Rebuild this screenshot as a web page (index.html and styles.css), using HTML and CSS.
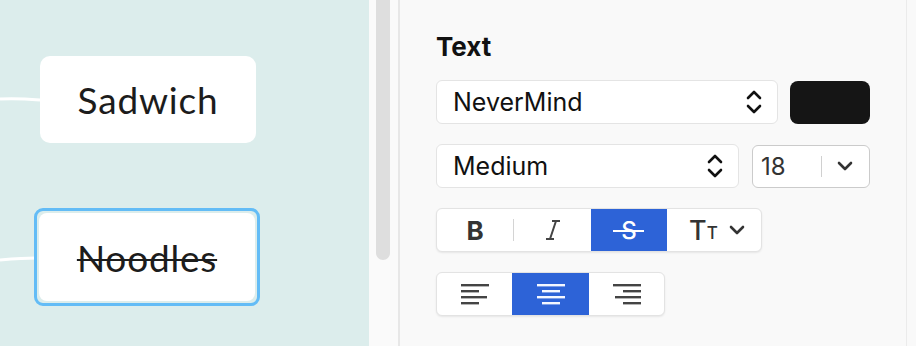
FILE: index.html
```html
<!DOCTYPE html>
<html lang="en">
<head>
    <meta charset="UTF-8">
    <meta name="viewport" content="width=device-width, initial-scale=1.0">
    <title>Mind Map - Text Style</title>
    <link rel="stylesheet" href="styles.css">
</head>
<body>

    <div class="app">
        <!-- Map canvas -->
        <div class="canvas">
            <svg class="links" width="369" height="346">
                <path d="M0 99 C 15 98, 28 99, 40 100" />
                <path d="M0 260 C 12 259, 24 258, 36 258" />
            </svg>
            <div class="node node-sandwich">Sadwich</div>
            <div class="node-frame node-noodles">
                <div class="node node-done">Noodles</div>
            </div>
        </div>

        <div class="gutter">
            <div class="thumb"></div>
        </div>

        <!-- Style panel -->
        <div class="panel">
            <h3>Text</h3>

            <div class="row">
                <div class="select font-select">
                    <span>NeverMind</span>
                    <svg class="updown" width="16" height="28" viewBox="0 0 16 28">
                        <path d="M2 10 L8 4 L14 10 M2 18 L8 24 L14 18" />
                    </svg>
                </div>
                <div class="swatch"></div>
            </div>

            <div class="row">
                <div class="select weight-select">
                    <span>Medium</span>
                    <svg class="updown" width="16" height="28" viewBox="0 0 16 28">
                        <path d="M2 10 L8 4 L14 10 M2 18 L8 24 L14 18" />
                    </svg>
                </div>
                <div class="size-box">
                    <span class="size-value">18</span>
                    <span class="size-divider"></span>
                    <svg class="chev" width="16" height="10" viewBox="0 0 16 10">
                        <path d="M2 2 L8 8 L14 2" />
                    </svg>
                </div>
            </div>

            <div class="row">
                <div class="seg-group style-group">
                    <button class="seg seg-bold">B</button>
                    <span class="seg-sep"></span>
                    <button class="seg seg-italic">
                        <svg width="18" height="22" viewBox="0 0 18 22">
                            <path d="M8 2 H16 M2 20 H10 M12 2 L6 20" />
                        </svg>
                    </button>
                    <button class="seg seg-strike active"><span>S</span></button>
                    <button class="seg seg-case">
                        <span class="big-t">T</span><span class="small-t">T</span>
                        <svg class="chev" width="16" height="10" viewBox="0 0 16 10">
                            <path d="M2 2 L8 8 L14 2" />
                        </svg>
                    </button>
                </div>
            </div>

            <div class="row">
                <div class="seg-group align-group">
                    <button class="seg">
                        <svg width="28" height="22" viewBox="0 0 28 22">
                            <rect x="0" y="1" width="28" height="2.4" />
                            <rect x="0" y="7" width="18" height="2.4" />
                            <rect x="0" y="13" width="26" height="2.4" />
                            <rect x="0" y="19" width="18" height="2.4" />
                        </svg>
                    </button>
                    <button class="seg active">
                        <svg width="28" height="22" viewBox="0 0 28 22">
                            <rect x="0" y="1" width="28" height="2.4" />
                            <rect x="5" y="7" width="18" height="2.4" />
                            <rect x="0" y="13" width="28" height="2.4" />
                            <rect x="5" y="19" width="18" height="2.4" />
                        </svg>
                    </button>
                    <button class="seg">
                        <svg width="28" height="22" viewBox="0 0 28 22">
                            <rect x="0" y="1" width="28" height="2.4" />
                            <rect x="10" y="7" width="18" height="2.4" />
                            <rect x="2" y="13" width="26" height="2.4" />
                            <rect x="10" y="19" width="18" height="2.4" />
                        </svg>
                    </button>
                </div>
            </div>
        </div>

        <div class="edge"></div>
    </div>

</body>
</html>
```

FILE: styles.css
```css
/* General Styles */
body {
    margin: 0;
    padding: 0;
    font-family: Inter, "Liberation Sans", sans-serif;
    background-color: #f9f9f9;
    overflow: hidden;
}

.app {
    display: flex;
    width: 916px;
    height: 346px;
}

/* Canvas */
.canvas {
    position: relative;
    width: 369px;
    flex-shrink: 0;
    background-color: #dcedec;
}

.links {
    position: absolute;
    left: 0;
    top: 0;
}

.links path {
    fill: none;
    stroke: #ffffff;
    stroke-width: 3;
}

.node {
    display: flex;
    align-items: center;
    justify-content: center;
    background-color: #fff;
    border-radius: 10px;
    font-family: Lato, "Noto Sans", sans-serif;
    font-size: 37px;
    letter-spacing: 0.8px;
    color: #1c1c1c;
}

.node-sandwich {
    position: absolute;
    left: 40px;
    top: 56px;
    width: 216px;
    height: 87px;
}

.node-frame {
    position: absolute;
    left: 34px;
    top: 208px;
    width: 216px;
    height: 88px;
    padding: 2px;
    border: 3px solid #63bcf6;
    border-radius: 9px;
}

.node-done {
    height: 100%;
    border-radius: 8px;
    text-decoration: line-through;
    text-decoration-thickness: 2px;
}

/* Scroll gutter */
.gutter {
    width: 29px;
    flex-shrink: 0;
    background-color: #fafafa;
}

.thumb {
    width: 14px;
    height: 260px;
    margin-left: 7px;
    background-color: #dedede;
    border-radius: 0 0 7px 7px;
}

/* Panel */
.panel {
    width: 470px;
    flex-shrink: 0;
    border-left: 2px solid #e7e7e7;
    padding: 32px 0 0 36px;
    background-color: #f9f9f9;
}

.panel h3 {
    margin: 0 0 18px 0;
    font-size: 26px;
    line-height: 30px;
    font-weight: 700;
    color: #111;
}

.row {
    display: flex;
    align-items: center;
    height: 44px;
    margin-bottom: 20px;
}

.select {
    display: flex;
    align-items: center;
    justify-content: space-between;
    height: 44px;
    box-sizing: border-box;
    padding: 0 15px 0 16px;
    background-color: #fff;
    border: 1px solid #e4e4e4;
    border-radius: 6px;
    font-size: 25px;
    color: #111;
}

.updown path,
.chev path {
    fill: none;
    stroke: #111;
    stroke-width: 2.6;
    stroke-linecap: round;
    stroke-linejoin: round;
}

.font-select {
    width: 342px;
}

.swatch {
    width: 80px;
    height: 43px;
    margin-left: 12px;
    border-radius: 8px;
    background-color: #151515;
}

.weight-select {
    width: 303px;
}

.size-box {
    display: flex;
    align-items: center;
    width: 118px;
    height: 43px;
    box-sizing: border-box;
    margin-left: 13px;
    padding-left: 8px;
    background-color: #fff;
    border: 1px solid #cbcbcb;
    border-radius: 6px;
    font-size: 24px;
    color: #333;
}

.size-value {
    width: 60px;
}

.size-divider {
    width: 1px;
    height: 21px;
    background-color: #d0d0d0;
    margin-right: 15px;
}

.size-box .chev path {
    stroke: #333;
}

/* Segmented groups */
.seg-group {
    display: flex;
    align-items: center;
    height: 44px;
    box-sizing: border-box;
    background-color: #fff;
    border: 1px solid #e3e3e3;
    border-radius: 6px;
    box-shadow: 0 1px 2px rgba(0, 0, 0, 0.08);
    overflow: hidden;
}

.seg {
    display: flex;
    align-items: center;
    justify-content: center;
    height: 100%;
    width: 76px;
    padding: 0;
    border: none;
    background: none;
    color: #333;
    font-family: Inter, "Liberation Sans", sans-serif;
}

.seg.active {
    background-color: #2d63d7;
    color: #fff;
}

.seg svg rect {
    fill: #444;
}

.seg.active svg rect {
    fill: #f4f7ff;
}

.seg-sep {
    width: 1px;
    height: 22px;
    background-color: #d4d4d4;
}

.seg-bold {
    font-size: 26px;
    font-weight: 700;
}

.seg-italic {
    width: 77px;
}

.seg-italic path {
    fill: none;
    stroke: #444;
    stroke-width: 2;
}

.seg-strike {
    position: relative;
    font-size: 24px;
    font-weight: 500;
}

.seg-strike::after {
    content: "";
    position: absolute;
    left: 22px;
    right: 23px;
    top: 21px;
    height: 2px;
    background-color: #fff;
}

.seg-case {
    width: 94px;
    justify-content: flex-start;
    padding-left: 22px;
    box-sizing: border-box;
}

.big-t {
    font-size: 27px;
    font-weight: 500;
}

.small-t {
    font-size: 17px;
    font-weight: 500;
    margin-top: 5px;
    margin-right: 11px;
}

.seg-case .chev path {
    stroke: #333;
}

.align-group {
    width: 229px;
}

.align-group .seg {
    width: 76px;
}

.align-group .seg.active {
    width: 78px;
}

.edge {
    width: 1px;
    background-color: #ebebeb;
}
```
